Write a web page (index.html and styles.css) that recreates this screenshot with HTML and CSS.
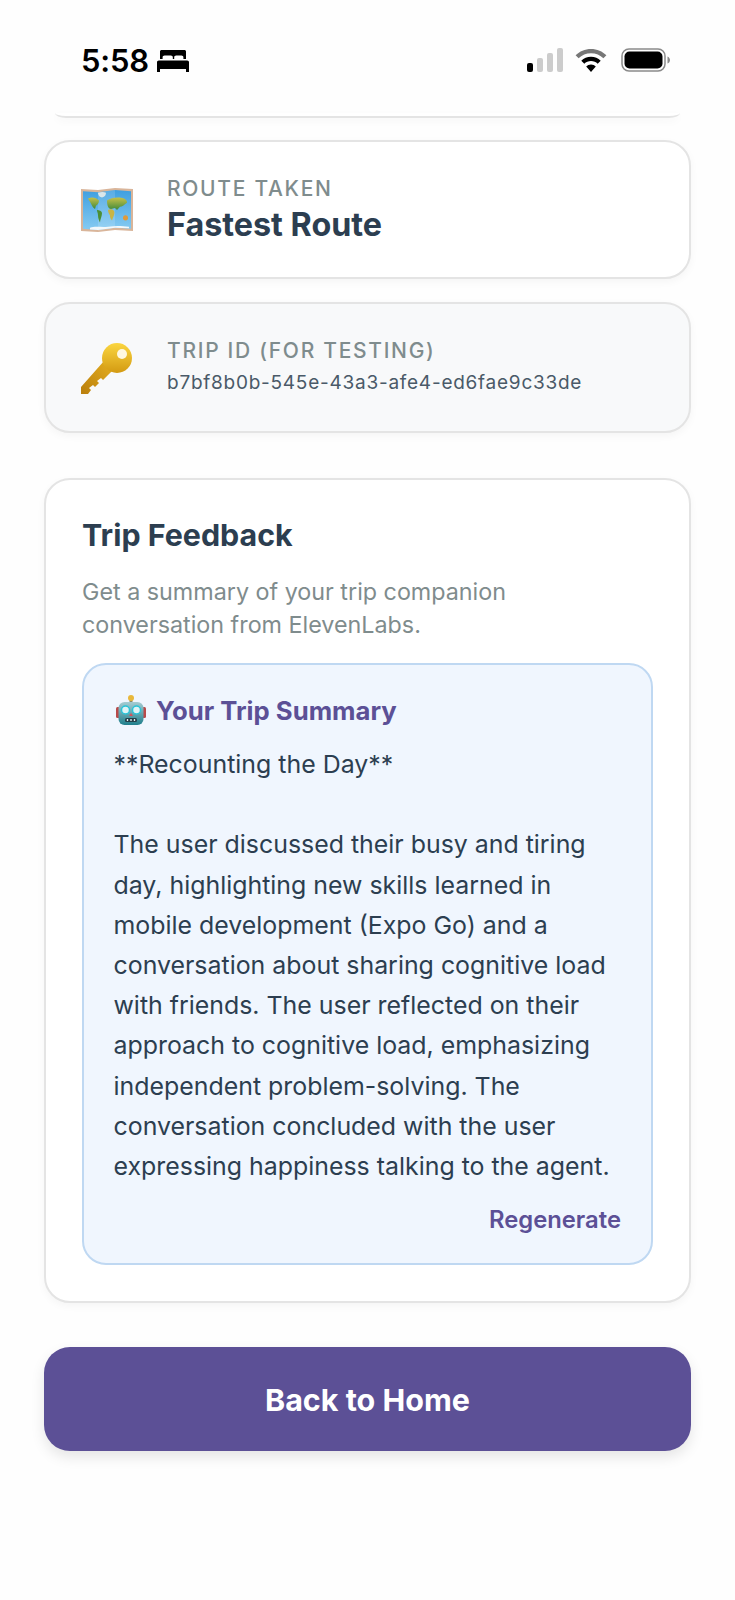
FILE: index.html
```html
<!DOCTYPE html>
<html lang="en">
<head>
<meta charset="utf-8">
<title>Trip Feedback</title>
<link rel="stylesheet" href="styles.css">
</head>
<body>
<div class="status">
  <div class="status-left">
    <span class="time">5:58</span>
    <svg class="bed" viewBox="0 0 32 22"><path d="M3 1.500C3 .7 3.700 0 4.500 0h23c.8 0 1.500.7 1.500 1.500V9h-2.600V7.300c0-1.200-.8-1.900-2-1.900h-5.200c-1.200 0-2 .7-2 1.900V9h-1.400V7.300c0-1.200-.8-1.900-2-1.900H7.600c-1.200 0-2 .7-2 1.900V9H3V1.500zM1.800 10.500h28.400c1 0 1.800.8 1.800 1.800V22h-3v-3H3v3H0v-9.700c0-1 .8-1.800 1.800-1.800z" fill="#000"/></svg>
  </div>
  <div class="status-right">
    <svg class="signal" viewBox="0 0 36 24"><rect x="0" y="15" width="6" height="9" rx="2" fill="#000"/><rect x="10" y="10" width="6" height="14" rx="2" fill="#ccc"/><rect x="20" y="5" width="6" height="19" rx="2" fill="#ccc"/><rect x="30" y="0" width="6" height="24" rx="2" fill="#ccc"/></svg>
    <svg class="wifi" viewBox="0 0 32 23"><path d="M16 0C10 0 4.600 2.400.6 6.300l3 3C6.800 6.200 11.200 4.300 16 4.300s9.200 1.900 12.400 5l3-3C27.400 2.400 22 0 16 0z" fill="#777"/><path d="M16 7.800c-3.800 0-7.200 1.500-9.700 3.900l3 3c1.700-1.700 4.100-2.700 6.700-2.700s5 1 6.700 2.700l3-3c-2.500-2.400-5.900-3.900-9.700-3.900zM16 15.500c-1.900 0-3.600.8-4.800 2L16 23l4.800-5.500c-1.200-1.200-2.900-2-4.800-2z" fill="#000"/></svg>
    <svg class="battery" viewBox="0 0 50 24"><rect x="1" y="1" width="43" height="22" rx="7" fill="none" stroke="#8a8a8a" stroke-width="1.500"/><rect x="3.500" y="3.500" width="38" height="17" rx="5" fill="#000"/><path d="M46.500 8.500c1.500.5 2.500 2 2.500 3.500s-1 3-2.500 3.500z" fill="#8a8a8a"/></svg>
  </div>
</div>

<main class="content">
  <div class="card-stub"></div>

  <section class="card info-card">
    <svg class="emoji map" viewBox="0 0 52 42" preserveAspectRatio="none">
      <defs>
        <linearGradient id="sea" x1="0" y1="0" x2="0" y2="1"><stop offset="0" stop-color="#3f9fe0"/><stop offset="1" stop-color="#86cbf2"/></linearGradient>
        <linearGradient id="land" x1="0" y1="0" x2="0" y2="1"><stop offset="0" stop-color="#c8c24a"/><stop offset="1" stop-color="#3f8a3a"/></linearGradient>
      </defs>
      <path d="M0 1l17 1 17-2 18 1v40l-18-1-17 2L0 41z" fill="#d9b59a"/>
      <path d="M2 3l15 1 17-2 16 1v36l-16-1-17 2-15-1z" fill="url(#sea)"/>
      <path d="M17 4v37l17-3V2z" fill="#fff" opacity=".14"/>
      <path d="M17 4.500c3-1 6-1 8 0 0 2-1 4-4 4.500-2 0-4-2-4-4.500z" fill="#dbe6ea"/>
      <path d="M7 10c4-2 8-1 11 2 0 3-2 4-3 5l-1 3c-2-1-3-3-4-5-1-2-2-3-3-5z" fill="url(#land)"/>
      <path d="M16 21c2 0 5 1 5 3 0 3-2 6-2 9-1-2-2-4-2-7 0-2-1-3-1-5z" fill="#4b8f35"/>
      <path d="M26 12c4-3 12-4 17-2 2 1 3 2 3 4-3 2-5 4-7 4l-3 3-2-2-4 1c-2 0-4-2-4-8z" fill="url(#land)"/>
      <path d="M27 21c2-1 5-1 6 1 1 2 0 4-2 9-2-2-2-3-2-5-1-1-2-3-2-5z" fill="#c9b545"/>
      <circle cx="44.500" cy="28.500" r="2.500" fill="#e09a3a"/>
      <path d="M9 38c6-2 11 0 18-1s13-1 21 0v1.500l-14-.5-17 2-8-.5z" fill="#f2f8fb"/>
    </svg>
    <div class="info-text">
      <div class="label">ROUTE TAKEN</div>
      <div class="value">Fastest Route</div>
    </div>
  </section>

  <section class="card info-card id-card">
    <svg class="emoji" viewBox="0 0 52 52">
      <defs>
        <linearGradient id="gold" x1="0" y1="0" x2="0" y2="1"><stop offset="0" stop-color="#fbd640"/><stop offset="1" stop-color="#d39a12"/></linearGradient>
        <linearGradient id="shaft" x1="1" y1="0" x2="0" y2="1"><stop offset="0" stop-color="#e6b020"/><stop offset="1" stop-color="#b97e0c"/></linearGradient>
      </defs>
      <path d="M23 19L0 45v7h7l3-4-2-2 4-3 2 2 4-4-2-2 4-3 2 2 11-11z" fill="url(#shaft)"/>
      <circle cx="36" cy="16" r="15" fill="url(#gold)"/>
      <circle cx="41" cy="12" r="5" fill="#fff8e0"/>
    </svg>
    <div class="info-text">
      <div class="label">TRIP ID (FOR TESTING)</div>
      <div class="trip-id">b7bf8b0b-545e-43a3-afe4-ed6fae9c33de</div>
    </div>
  </section>

  <section class="card feedback">
    <h2 class="feedback-title">Trip Feedback</h2>
    <p class="feedback-desc">Get a summary of your trip companion conversation from ElevenLabs.</p>
    <div class="summary">
      <div class="summary-head">
        <svg class="robot" viewBox="0 0 30 30">
          <defs><linearGradient id="bot" x1="0" y1="0" x2="0" y2="1"><stop offset="0" stop-color="#a6ccd2"/><stop offset="1" stop-color="#1f7f8c"/></linearGradient></defs>
          <rect x="13.500" y="3" width="3" height="5" fill="#8a8a6a"/>
          <circle cx="15" cy="3" r="3" fill="#e8b83c"/>
          <rect x="0" y="12" width="4" height="11" rx="1.500" fill="#b84a4a"/>
          <rect x="26" y="12" width="4" height="11" rx="1.500" fill="#b84a4a"/>
          <rect x="2.500" y="7" width="25" height="23" rx="6" fill="url(#bot)"/>
          <circle cx="9.500" cy="15" r="4" fill="#dff4f6" stroke="#28c4d8" stroke-width="1.500"/>
          <circle cx="20.500" cy="15" r="4" fill="#dff4f6" stroke="#28c4d8" stroke-width="1.500"/>
          <path d="M15 18l2 3h-4z" fill="#d8505a"/>
          <rect x="9" y="23" width="12" height="4" rx="1.500" fill="#23404a"/>
          <path d="M11.500 24v2M15 24v2M18.500 24v2" stroke="#e8f0f0" stroke-width="1.300"/>
        </svg>
        <h3 class="summary-title">Your Trip Summary</h3>
      </div>
      <p class="summary-body">**Recounting the Day**

The user discussed their busy and tiring day, highlighting new skills learned in mobile development (Expo Go) and a conversation about sharing cognitive load with friends. The user reflected on their approach to cognitive load, emphasizing independent problem-solving. The conversation concluded with the user expressing happiness talking to the agent.</p>
      <div class="regen">Regenerate</div>
    </div>
  </section>

  <button class="home-btn">Back to Home</button>
</main>
</body>
</html>
```

FILE: styles.css
```css
* { box-sizing: border-box; }
html, body { margin: 0; padding: 0; }
body {
  width: 735px;
  height: 1600px;
  overflow: hidden;
  background: #fefefe;
  font-family: Inter, "Liberation Sans", sans-serif;
  color: #2c3e50;
}
.status {
  height: 113px;
  padding: 0 0 0 81px;
  display: flex;
  justify-content: space-between;
  align-items: flex-start;
}
.status-left {
  display: flex;
  align-items: center;
  gap: 8px;
  margin-top: 42px;
  height: 36px;
}
.time {
  font-size: 31px;
  font-weight: 600;
  color: #000;
  letter-spacing: -0.2px;
}
.bed { width: 32px; height: 22px; margin-top: 1px; }
.status-right {
  display: flex;
  align-items: center;
  gap: 12px;
  margin: 48px 64px 0 0;
  height: 24px;
}
.signal { width: 36px; height: 24px; }
.wifi { width: 32px; height: 23px; }
.battery { width: 50px; height: 24px; margin-left: 2px; }

.content {
  padding: 0 44px;
  display: flex;
  flex-direction: column;
}
.card-stub {
  height: 5px;
  margin: 0 11px 22px;
  background: #fff;
  border-bottom: 2px solid #e4e4e4;
  border-radius: 0 0 11px 11px / 0 0 5px 5px;
  box-shadow: 0 3px 8px rgba(0,0,0,.04);
}
.card {
  background: #fff;
  border: 2px solid #e4e4e4;
  border-radius: 26px;
  box-shadow: 0 3px 8px rgba(0,0,0,.04);
}
.info-card {
  height: 139px;
  display: flex;
  align-items: center;
  padding: 0 0 0 35px;
  margin-bottom: 23px;
}
.id-card {
  height: 131px;
  background: #f8f9fa;
  margin-bottom: 45px;
}
.emoji { width: 52px; height: 52px; flex: none; margin-right: 34px; }
.map { height: 44px; }
.label {
  font-size: 21px;
  font-weight: 500;
  letter-spacing: 1.700px;
  line-height: 30px;
  color: #7f8c8d;
}
.value {
  font-size: 32.300px;
  font-weight: 700;
  line-height: 42px;
  color: #2c3e50;
}
.trip-id {
  font-size: 19px;
  line-height: 33px;
  letter-spacing: .75px;
  color: #4a5a68;
}
.feedback {
  height: 825px;
  padding: 35px 36px 0;
  margin-bottom: 44px;
}
.feedback-title {
  margin: 0;
  font-size: 30.400px;
  font-weight: 700;
  line-height: 40px;
  color: #2c3e50;
}
.feedback-desc {
  margin: 21px 0 22px;
  max-width: 520px;
  font-size: 23.300px;
  line-height: 32.500px;
  color: #7f8c8d;
}
.summary {
  height: 602px;
  background: #f0f6fe;
  border: 2px solid #bfd8f2;
  border-radius: 24px;
  padding: 28px 30px 0 29.500px;
}
.summary-head { display: flex; align-items: center; gap: 10px; height: 34px; margin-left: 2.500px; }
.robot { width: 30px; height: 30px; flex: none; }
.summary-title {
  margin: 0;
  font-size: 25.700px;
  font-weight: 700;
  color: #5c5096;
}
.summary-body {
  margin: 17px 0 0;
  font-size: 24.900px;
  line-height: 40.200px;
  color: #2c3e50;
  white-space: pre-wrap;
}
.regen {
  margin-top: 19px;
  text-align: right;
  font-size: 23.800px;
  font-weight: 600;
  line-height: 30px;
  color: #5c5096;
}
.home-btn {
  height: 104px;
  border: 0;
  border-radius: 26px;
  background: #5c5096;
  color: #fff;
  font-family: inherit;
  font-size: 30.500px;
  font-weight: 700;
  box-shadow: 0 6px 14px rgba(0,0,0,.1);
}
```
